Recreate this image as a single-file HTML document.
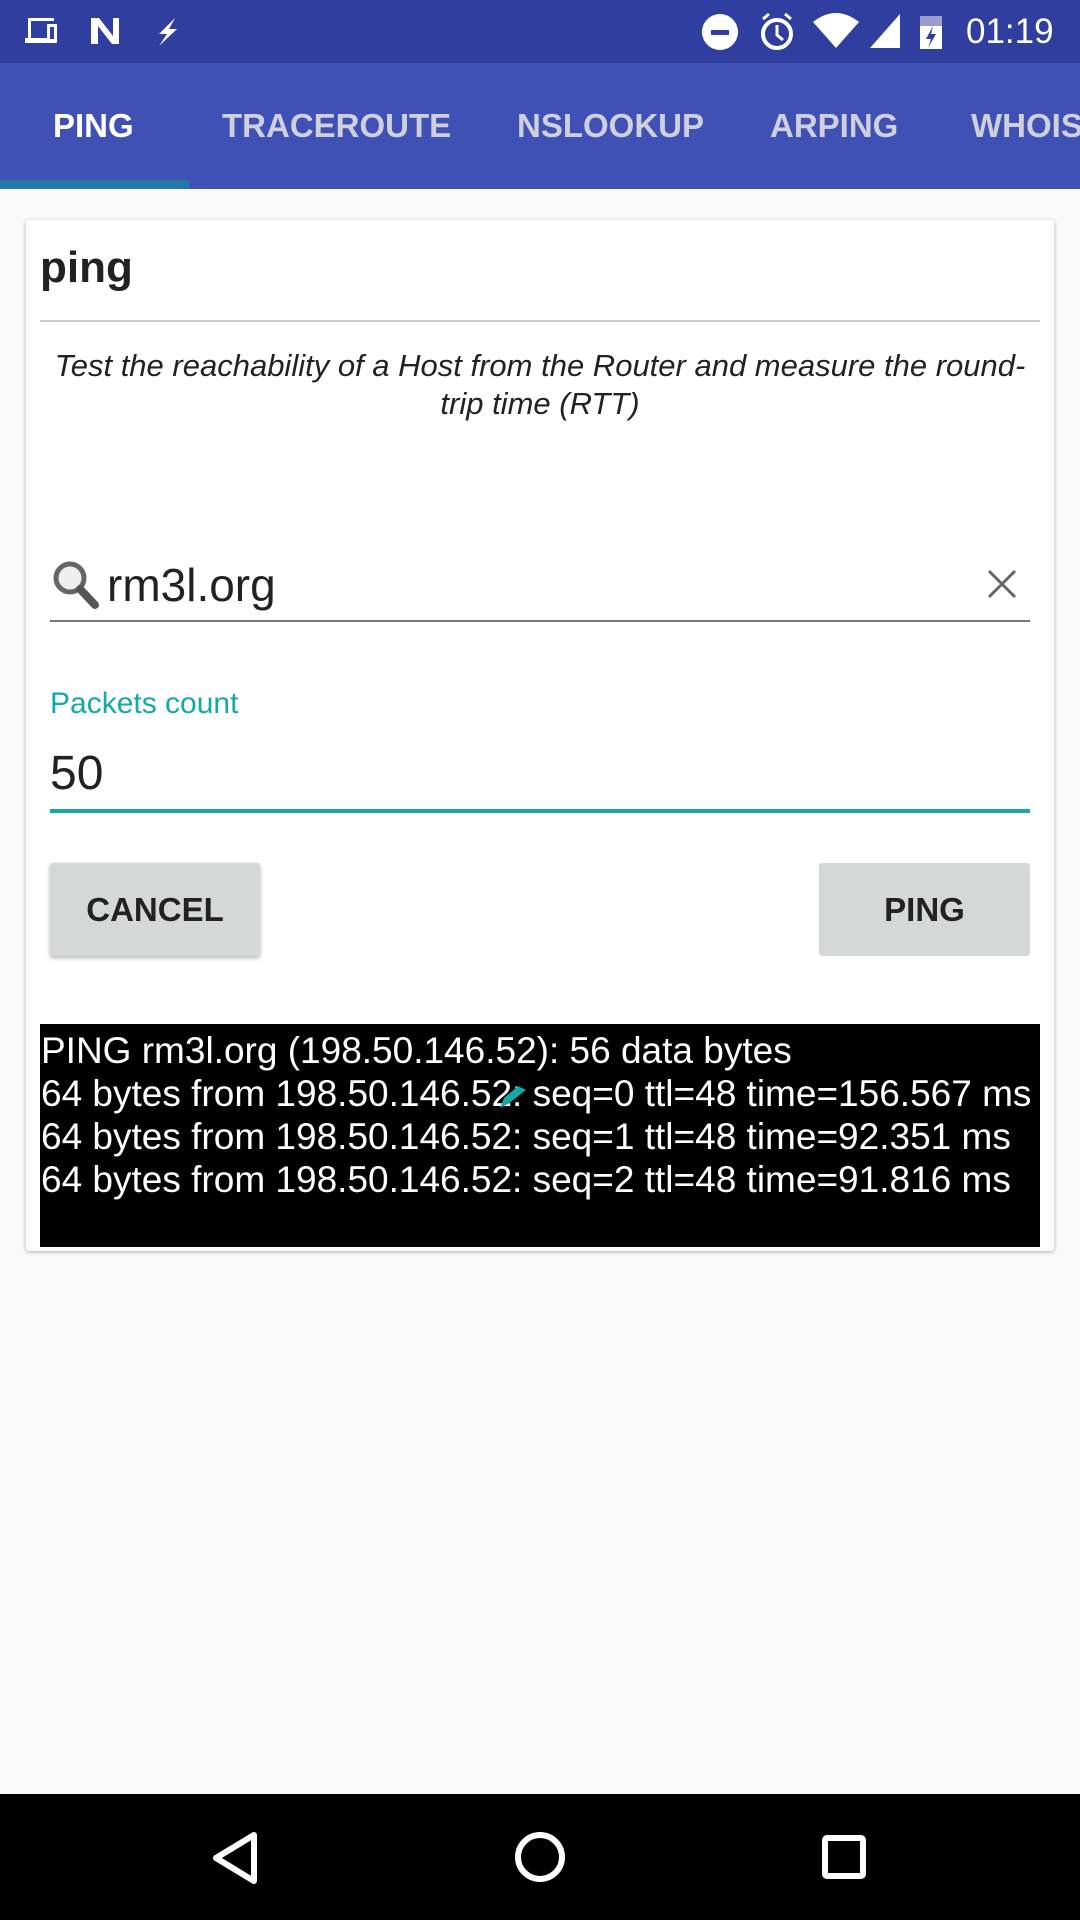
<!DOCTYPE html>
<html><head><meta charset="utf-8"><style>
*{margin:0;padding:0;box-sizing:border-box}
body{width:1080px;height:1920px;background:#fafafa;font-family:"Liberation Sans",sans-serif;position:relative;overflow:hidden}
.a{position:absolute}
.tab{position:absolute;top:107px;font-size:33px;color:#d0d0dc;font-weight:bold;letter-spacing:0}
.btn{position:absolute;top:863px;height:93px;background:#d6d7d7;border-radius:3px;font-size:33px;font-weight:bold;color:#222;display:flex;align-items:center;justify-content:center}
.pl{position:absolute;left:41px;font-size:37px;color:#fff;white-space:nowrap;letter-spacing:0}
</style></head><body>
<div class="a" style="left:0;top:0;width:1080px;height:63px;background:#303f9f"></div>
<svg class="a" style="left:25px;top:14px" width="170" height="36" viewBox="0 0 170 36">
<g fill="#fff"><rect x="3" y="4" width="26" height="3"/><rect x="3" y="4" width="3" height="22"/><rect x="0" y="24" width="22" height="5"/><rect x="22" y="10" width="10" height="19" rx="1"/></g>
<rect x="25" y="13" width="4" height="12" fill="#303f9f"/>
<path d="M66 4h8l14 18V4h6v26h-7L73 12v18h-7z" fill="#fff"/>
<path d="M150 4l-16 16h8l-8 12 18-17h-8z" fill="#fff"/>
</svg>
<svg class="a" style="left:700px;top:10px" width="270" height="44" viewBox="0 0 270 44">
<circle cx="20" cy="22" r="18" fill="#fff"/><rect x="11" y="20" width="18" height="5" fill="#303f9f"/>
<circle cx="77" cy="24" r="14" fill="none" stroke="#fff" stroke-width="4"/><path d="M77 15v10l6 5" stroke="#fff" stroke-width="3" fill="none"/><path d="M63 9l6-5M91 9l-6-5" stroke="#fff" stroke-width="3"/>
<path d="M113 12q23-18 46 0l-23 26z" fill="#fff"/>
<path d="M200 4v34h-30z" fill="#fff"/>
<rect x="220" y="6" width="22" height="33" fill="#fff" opacity="0.5"/><rect x="220" y="16" width="22" height="23" fill="#fff"/>
<path d="M233 16l-7 13h5l-3 9 8-14h-5z" fill="#303f9f"/>
</svg>
<div class="a" style="left:966px;top:12px;font-size:35px;color:#fff">01:19</div>
<div class="a" style="left:0;top:63px;width:1080px;height:126px;background:#3f51b5"></div>
<div class="tab" style="left:53px;color:#fff">PING</div>
<div class="tab" style="left:222px">TRACEROUTE</div>
<div class="tab" style="left:517px">NSLOOKUP</div>
<div class="tab" style="left:770px">ARPING</div>
<div class="tab" style="left:971px">WHOIS</div>
<div class="a" style="left:0;top:180px;width:189px;height:9px;background:#2378a8"></div>
<div class="a" style="left:26px;top:220px;width:1028px;height:1031px;background:#fff;border-radius:3px;box-shadow:0 1px 4px rgba(0,0,0,.3)"></div>
<div class="a" style="left:40px;top:243px;font-size:44px;font-weight:bold;color:#222">ping</div>
<div class="a" style="left:40px;top:320px;width:1000px;height:2px;background:#ccc"></div>
<div class="a" style="left:40px;top:347px;width:1000px;text-align:center;font-size:31px;font-style:italic;color:#222;line-height:38px">Test the reachability of a Host from the Router and measure the round-<br>trip time (RTT)</div>
<svg class="a" style="left:52px;top:560px" width="52" height="50" viewBox="0 0 52 50"><circle cx="18" cy="18" r="14" fill="#eee" stroke="#666" stroke-width="5"/><path d="M28 29l15 16" stroke="#555" stroke-width="8" stroke-linecap="round"/></svg>
<div class="a" style="left:107px;top:558px;font-size:46px;color:#222">rm3l.org</div>
<svg class="a" style="left:986px;top:568px" width="32" height="32" viewBox="0 0 32 32"><path d="M3 3l26 26M29 3L3 29" stroke="#666" stroke-width="3"/></svg>
<div class="a" style="left:50px;top:620px;width:980px;height:2px;background:#777"></div>
<div class="a" style="left:50px;top:687px;font-size:30px;color:#14a9a9">Packets count</div>
<div class="a" style="left:50px;top:746px;font-size:48px;color:#222">50</div>
<div class="a" style="left:50px;top:809px;width:980px;height:4px;background:#14a9a9"></div>
<div class="btn" style="left:50px;width:210px;box-shadow:0 2px 4px rgba(0,0,0,.3)">CANCEL</div>
<div class="btn" style="left:819px;width:211px">PING</div>
<div class="a" style="left:40px;top:1024px;width:1000px;height:223px;background:#000"></div>
<div class="pl" style="top:1030px">PING rm3l.org (198.50.146.52): 56 data bytes</div>
<div class="pl" style="top:1073px">64 bytes from 198.50.146.52: seq=0 ttl=48 time=156.567 ms</div>
<div class="pl" style="top:1116px">64 bytes from 198.50.146.52: seq=1 ttl=48 time=92.351 ms</div>
<div class="pl" style="top:1159px">64 bytes from 198.50.146.52: seq=2 ttl=48 time=91.816 ms</div>
<svg class="a" style="left:496px;top:1084px" width="32" height="28" viewBox="0 0 32 28"><path d="M4 24l8-4 18-14-8-4-14 12z" fill="#14a9a9"/></svg>
<div class="a" style="left:0;top:1794px;width:1080px;height:126px;background:#000"></div>
<svg class="a" style="left:0;top:1794px" width="1080" height="126" viewBox="0 0 1080 126">
<path d="M254 41v46l-38-23z" fill="none" stroke="#fff" stroke-width="6" stroke-linejoin="round"/>
<circle cx="540" cy="63" r="22" fill="none" stroke="#fff" stroke-width="6"/>
<rect x="825" y="44" width="38" height="38" rx="2" fill="none" stroke="#fff" stroke-width="6"/>
</svg>
</body></html>
